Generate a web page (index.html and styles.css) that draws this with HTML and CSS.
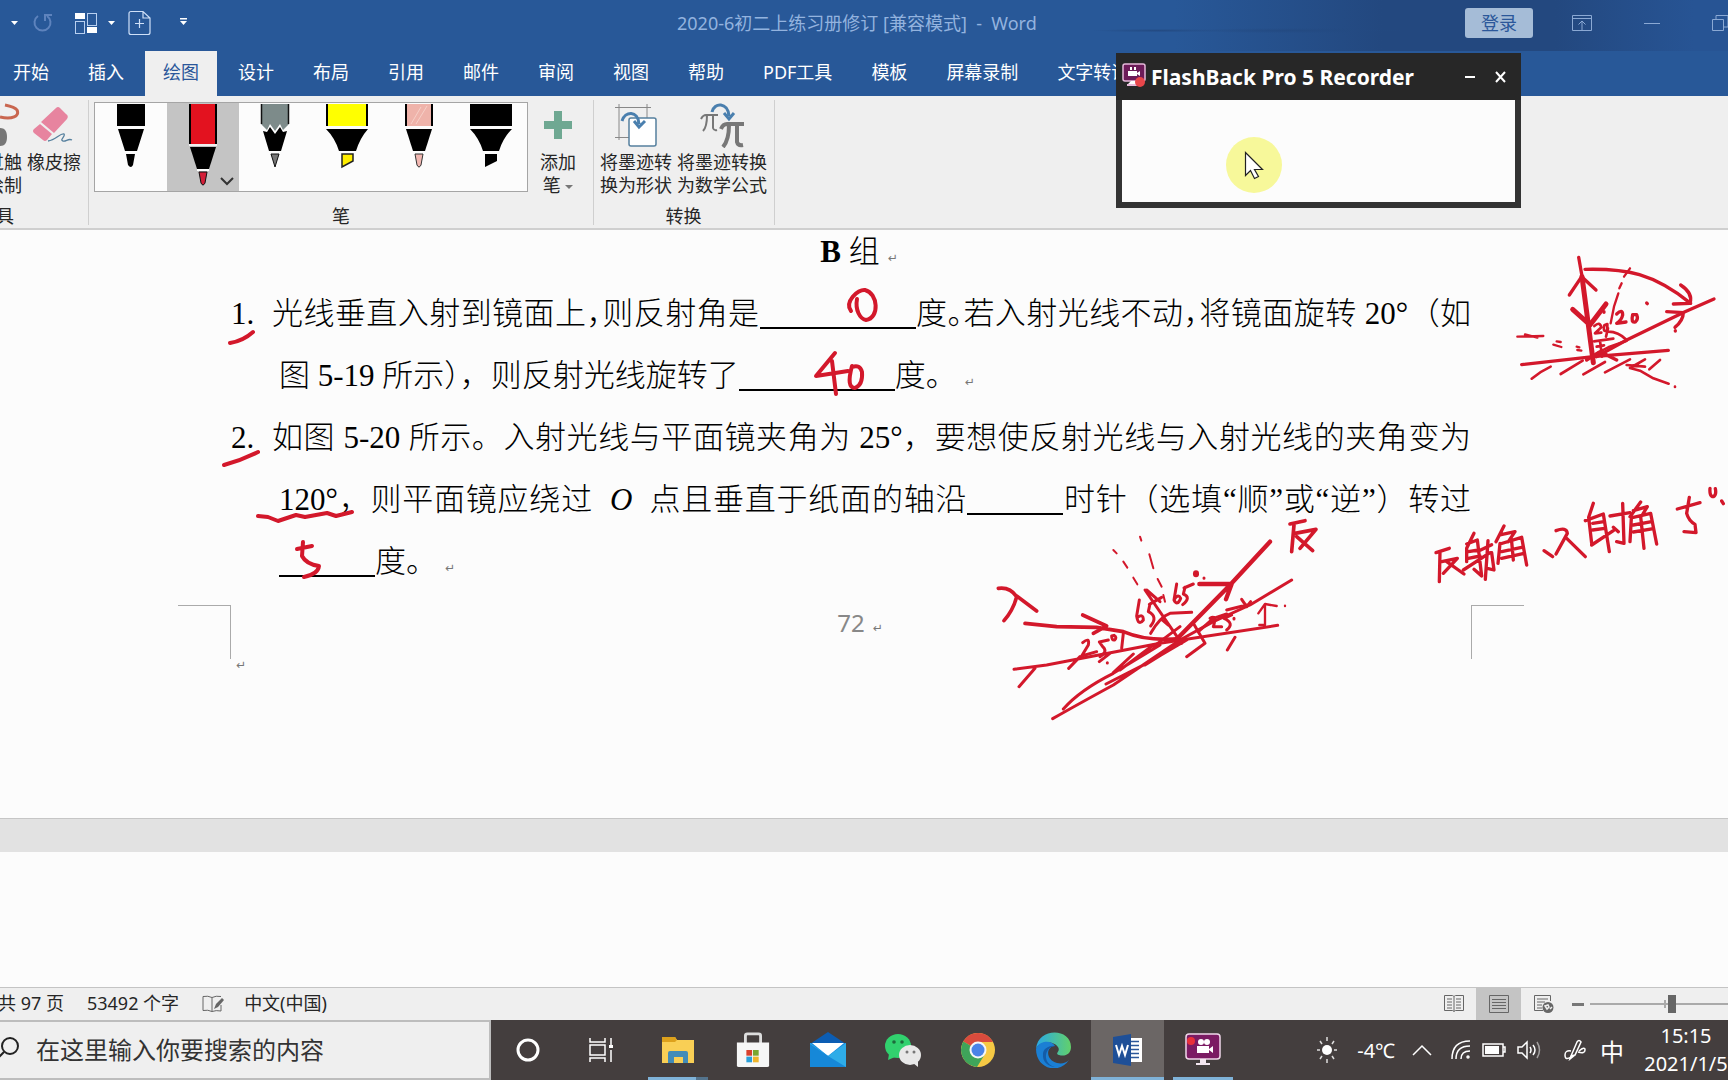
FILE: index.html
```html
<!DOCTYPE html>
<html lang="zh-CN">
<head>
<meta charset="utf-8">
<title>2020-6初二上练习册修订 [兼容模式] - Word</title>
<link rel="stylesheet" href="styles.css">
</head>
<body>
<div class="app">
  <header class="titlebar">
    <div class="quick">
      <svg width="200" height="48" viewBox="0 0 200 48" aria-hidden="true">
        <path d="M11 22h7l-3.500 4z" fill="#fff"/>
        <path d="M38 17a8 8 0 1 0 9 0M45 22v-6h7" fill="none" stroke="#5e83bd" stroke-width="2"/>
        <g fill="none" stroke="#b9d0f0"><rect x="75.500" y="22.500" width="9" height="12"/><rect x="87.500" y="14.500" width="9" height="12"/></g>
        <path d="M75 14h10v6H75zM87 28h10v6H87z" fill="#fff"/>
        <path d="M108 22h7l-3.500 4z" fill="#fff"/>
        <path d="M143 12.500h-12q-2 0-2 2v19q0 2 2 2h17q2 0 2-2V19zM143 12.500V19h7M135 24.500h9M139.500 20v9" fill="none" stroke="#cfe0f8" stroke-width="1.200"/>
        <path d="M180 19h7v1.500h-7zM180 22h7l-3.500 4z" fill="#fff"/>
      </svg>
    </div>
    <h1 class="doc-title">2020-6初二上练习册修订 [兼容模式]&nbsp; -&nbsp; Word</h1>
    <div class="window-tools">
      <button class="login">登录</button>
      <button class="win" aria-label="功能区显示选项"><svg width="20" height="16" viewBox="0 0 20 16"><path d="M.5.5h19v15H.5zM.5 3.500h19M10 15V6M6.500 9.500L10 6l3.500 3.500"/></svg></button>
      <button class="win" aria-label="最小化"><svg width="16" height="16" viewBox="0 0 16 16"><path d="M0 8.500h16"/></svg></button>
      <button class="win" aria-label="还原"><svg width="16" height="16" viewBox="0 0 16 16"><path d="M.5 4.500h11v11H.5zM4 4V.5h12V12h-4"/></svg></button>
    </div>
  </header>
  <nav class="tabs">
    <button>开始</button><button>插入</button><button class="active">绘图</button><button>设计</button><button>布局</button><button>引用</button><button>邮件</button><button>审阅</button><button>视图</button><button>帮助</button><button>PDF工具</button><button>模板</button><button>屏幕录制</button><button>文字转语音</button>
  </nav>
  <section class="ribbon">
    <div class="group tools">
      <div class="row">
        <button class="cmd cut"><svg width="22" height="46" viewBox="0 0 22 46"><path d="M0 15c12 3 20-1 17-7-2-3-7-4-12-5" fill="none" stroke="#c9664f" stroke-width="3"/><path d="M0 26c6 0 7 5 7 9s-1 9-7 9z" fill="#777"/></svg><span>过触<br>绘制</span></button>
        <button class="cmd"><svg width="44" height="46" viewBox="0 0 44 46"><path d="M24 6q2-2 4 0l6 6q3 2 1 5L22 31 9 20z" fill="#e7849f"/><path d="M8 22l12 10-5 6q-2 2-4 0L2 31q-2-2 0-4z" fill="#e7849f"/><path d="M16 39c8-1 12-8 16-7 2 2-5 6-1 7 3 1 5-3 9-1" fill="none" stroke="#56809e" stroke-width="1.300"/></svg><span>橡皮擦</span></button>
      </div>
      <span class="label">具</span>
    </div>
    <div class="group">
      <div class="row">
        <div class="gallery">
          <button class="pen" aria-label="黑色笔"><svg viewBox="0 0 72 87"><path d="M22 0h28v22H22zM23 25h26l-7 22H30zM31 50h9l-2 11q-2 4-5 0z"/></svg></button>
          <button class="pen selected" aria-label="红色笔"><svg viewBox="0 0 72 87"><path d="M22 0h28v40H22z"/><path d="M24 0h24v40H24z" fill="#e3121f"/><path d="M22 41h28" stroke="#fff" stroke-width="1.500"/><path d="M23 43h26l-7 22H30z"/><path d="M30 66h12" stroke="#fff" stroke-width="2"/><path d="M32 68h8l-2 11q-2 4-4 0z" fill="#d31f38" stroke="#111"/><path d="M54 74l6 6 6-6" fill="none" stroke="#333" stroke-width="2"/></svg></button>
          <button class="pen" aria-label="铅笔"><svg viewBox="0 0 72 87"><path d="M22 0h28v20l-6 6-3-6-5 7-5-7-3 6-6-6z" fill="#7d8b8a"/><path d="M22.500 0v20M49.500 0v20" stroke="#111" stroke-width="1.500"/><path d="M24 27l4 1 3-5 5 7 5-7 3 5 4-1-6 20H30z"/><path d="M32 50h8l-4 13z" fill="#777" stroke="#111"/></svg></button>
          <button class="pen" aria-label="黄色荧光笔"><svg viewBox="0 0 72 87"><path d="M15 0h42v22H15z"/><path d="M17 0h38v22H17z" fill="#ff0"/><path d="M15 25h42q-8 9-12 22H28Q24 34 15 25z"/><path d="M31 50h11v7l-11 6z" fill="#fe0" stroke="#222" stroke-width="1.500"/></svg></button>
          <button class="pen" aria-label="粉色铅笔"><svg viewBox="0 0 72 87"><path d="M22 0h28v22H22z"/><path d="M24 0h24v22H24z" fill="#efb3aa"/><path d="M28 20L38 3M33 20L44 2" stroke="#f7d0c8"/><path d="M23 25h26l-7 22H30z"/><path d="M32 50h8l-2 11q-2 4-4 0z" fill="#f2b8b2" stroke="#333"/></svg></button>
          <button class="pen" aria-label="黑色荧光笔"><svg viewBox="0 0 72 87"><path d="M15 0h42v22H15zM15 25h42q-9 9-13 22H28Q24 34 15 25zM30 50h12v7l-12 6z"/></svg></button>
        </div>
        <button class="cmd add"><svg width="30" height="46" viewBox="0 0 30 46"><path d="M11 9h8v10h10v8H19v10h-8V27H1v-8h10z" fill="#6fa892"/></svg><span>添加<br>笔 <i class="caret"></i></span></button>
      </div>
      <span class="label">笔</span>
    </div>
    <div class="group convert">
      <div class="row">
        <button class="cmd"><svg width="44" height="46" viewBox="0 0 44 46"><path d="M5 2v36M33 2v36M1 5.500h36M1 35.500h20" fill="none" stroke="#888"/><rect x="15" y="16" width="27" height="28" rx="2" fill="#fff" stroke="#56809e" stroke-width="1.500"/><path d="M8 19C11 9 24 8 25 22M20 19l5 6 6-6" fill="none" stroke="#4a7fae" stroke-width="3"/></svg><span>将墨迹转<br>换为形状</span></button>
        <button class="cmd"><svg width="44" height="46" viewBox="0 0 44 46"><g fill="none" stroke="#777"><path d="M1 17q2-4 5-4h12M7 13q0 12-4 16M13 13v13q1 3 4 2" stroke-width="2"/><path d="M21 27q2-5 6-5h17M29 23q0 15-6 22M37 23v17q1 4 6 3" stroke-width="4"/></g><path d="M12 10C14 0 28 0 29 14M24 11l5 6 5-6" fill="none" stroke="#4a7fae" stroke-width="3"/></svg><span>将墨迹转换<br>为数学公式</span></button>
      </div>
      <span class="label">转换</span>
    </div>
  </section>

  <main class="canvas">
    <article class="sheet">
      <h2 class="heading"><b>B</b> 组<i class="mark">↵</i></h2>
      <div class="question">
        <span class="num">1.</span>
        <p>
          <span class="line full">光线垂直入射到镜面上<span class="half">，</span>则反射角是<span class="blank wide"></span>度<span class="half">。</span>若入射光线不动<span class="half">，</span>将镜面旋转 20°（如</span>
          <span class="line hang">图 5-19 所示<span class="half">）</span>，则反射光线旋转了<span class="blank wide"></span>度。<i class="mark">↵</i></span>
        </p>
      </div>
      <div class="question">
        <span class="num">2.</span>
        <p>
          <span class="line full">如图 5-20 所示。入射光线与平面镜夹角为 25°，要想使反射光线与入射光线的夹角变为</span>
          <span class="line full hang">120°，则平面镜应绕过&nbsp; <em>O</em>&nbsp; 点且垂直于纸面的轴沿<span class="blank"></span>时针（选填“顺”或“逆”）转过</span>
          <span class="line hang"><span class="blank"></span>度。<i class="mark">↵</i></span>
        </p>
      </div>
      <footer class="folio"><span class="corner left"></span><span class="number">72<i class="mark">↵</i></span><span class="corner right"></span></footer>
      <i class="mark end">↵</i>
    </article>
    <svg class="ink" width="1728" height="590" viewBox="0 230 1728 590" aria-hidden="true">
      <g stroke-width="4">
        <path d="M851 311C844 302 858 289 865 290C878 293 880 318 866 320C860 319 855 310 857 299"/>
        <path d="M835 353L816 376L848 371M832 361L836 394M852 366Q846 388 855 388Q863 385 862 372Q860 364 852 367"/>
        <path d="M230 343Q243 341 253 332M224 465Q242 460 258 452M258 516L268 517L278 521L296 515L305 517L327 513L336 516L352 512"/>
        <path d="M303 542L302 556Q306 564 319 566Q318 574 304 577M297 549L312 546"/>
      </g>
      <g transform="translate(1400 240) scale(.33333)" stroke-width="10">
        <path d="M536 52L548 120M508 165L545 110L588 150M555 88C680 85 760 100 872 190M842 135Q880 160 870 190L820 192"/>
        <path d="M546 110L580 368M518 208L570 255L618 192" stroke-width="15"/>
        <path d="M690 85L672 110M665 130L658 145M655 160L642 200L632 250" stroke-width="7"/>
        <path d="M590 350L680 300L855 215L942 177M800 215L850 218Q850 240 825 262"/>
        <path d="M650 222Q668 205 668 225Q665 240 650 250L678 246M698 224Q692 250 706 246Q716 238 710 224ZM740 189l2 2M826 272v1M612 215v2"/>
        <path d="M583 258Q600 243 604 262L585 280L604 278M613 256Q608 280 622 270L622 252ZM624 265L618 290M582 304L640 296M600 302L606 350M590 320L612 316M625 275Q655 275 680 300M590 340L625 322L680 302" stroke-width="8"/>
        <path d="M352 290L430 288M375 283L412 293M470 304l12 2M460 314l24 7M530 320l8 2M532 330l12 2" stroke-width="7"/>
        <path d="M365 374L580 350L805 331M560 360L600 335L650 360" />
        <path d="M452 380Q420 395 395 416M548 362L482 402M615 366L550 403M690 358L615 397M735 358L690 384L720 392L760 415L806 431M680 375L735 380M780 360L748 388M825 440v1" stroke-width="8"/>
        <path d="M108 938L148 925M120 935L118 1025M125 965L172 955L130 1000M140 965L192 1002"/>
        <path d="M222 880L200 925L200 965M200 912L232 900L245 1008L222 988M205 935L236 930M205 955L240 948M190 990L270 938M242 930L275 914M264 902L256 1018M275 938L282 990L262 985"/>
        <path d="M312 858L288 905M300 885L345 875L325 905M300 910L294 970M300 912L365 892L380 975M305 935L365 922M305 955L372 940M335 905L340 960"/>
        <path d="M432 932L458 950M468 872Q500 860 502 880L468 942M500 895L556 950"/>
        <path d="M580 790L566 832L575 910M556 842L610 822L628 935M578 850L612 845M578 870L614 865M575 915L640 872M630 828L690 818M668 790L672 910L650 905M640 862L655 875"/>
        <path d="M722 786L690 830M700 812L742 800L725 828M694 835L690 905M700 832L752 820L770 912M700 855L755 845M700 876L760 866M722 830L732 925"/>
        <path d="M868 772L860 820Q866 842 885 853L888 878L852 875M832 807L900 788M930 745Q928 770 940 770Q950 765 946 746M965 783l5 8"/>
      </g>
      <g transform="translate(980 510) scale(.33333)" stroke-width="9">
        <path d="M55 235Q90 230 110 260Q100 300 72 332M110 258L170 303" stroke-width="11"/>
        <path d="M135 340L230 350L350 352L430 365Q500 395 600 386M308 315L380 348L340 370" stroke-width="11"/>
        <path d="M102 478L200 465L540 400L893 346M165 475L117 530M300 440L266 475M390 430L358 455M382 458v1M640 340L675 400L620 440M765 382L742 420"/>
        <path d="M308 398Q330 380 325 405L305 438L350 425M385 390L358 396L368 410Q385 425 360 440M395 378Q395 392 404 390Q412 382 402 376ZM430 370L425 415"/>
        <path d="M218 626Q290 585 400 525L600 390L700 335L810 285L935 210M250 597Q300 540 400 490L540 405M378 522L500 460L620 390M400 488L460 432M420 480L520 405M495 465L600 400M520 410L600 350"/>
        <path d="M590 388L750 225L870 95M658 222L755 222L738 268" stroke-width="13"/>
        <path d="M930 42L975 32M942 45L935 125M945 70L1008 58L960 115M950 80L998 122" stroke-width="11"/>
        <path d="M400 120l10 10M430 155l12 18M460 203l12 20M480 80l4 12M508 133L520 175M533 207L545 230M550 255l5 20" stroke-width="6"/>
        <path d="M495 240L605 400M478 270L470 318Q475 350 490 330Q490 310 473 322M510 282L505 305Q535 320 512 348M508 283L545 262M500 240L540 275"/>
        <path d="M590 222L582 270Q592 290 602 265Q595 250 583 268M615 232L610 252Q635 262 608 284M612 234L640 222"/>
        <path d="M648 190v3" stroke-width="18"/>
        <path d="M672 204v1M512 370Q540 320 570 310L635 307M545 328L565 345"/>
        <path d="M690 325Q712 312 700 350L725 350M755 315L732 325Q765 340 740 360M740 300L800 285M785 268L800 290L812 275M655 365L700 325L740 312M762 325v2"/>
        <path d="M835 310L855 282L890 288M855 283L855 345L838 345M915 287v1" stroke-width="7"/>
      </g>
    </svg>
  </main>
  <div class="next-sheet"></div>

  <footer class="status">
    <span class="pages">共 97 页</span><span>53492 个字</span>
    <svg width="22" height="18" viewBox="0 0 22 18" aria-hidden="true"><path d="M1 1.500q5-1 9 1v14q-4-2-9-1zM10 2.500q4-2 9-1M19 10v6q-5-1-9 .5" fill="none" stroke="#666"/><path d="M12 14l2-5 6-6 2 2-6 7z" fill="#666"/></svg>
    <span>中文(中国)</span>
    <div class="views">
      <button aria-label="阅读视图"><svg width="20" height="18" viewBox="0 0 20 18"><path d="M.5.500h8l1.500 1 1.500-1h8v15h-8l-1.500 1-1.500-1h-8zM10 2v14M3 4h5M3 7h5M3 10h5M3 13h5M12 4h5M12 7h5M12 10h5M12 13h5"/></svg></button>
      <button class="on" aria-label="页面视图"><svg width="20" height="18" viewBox="0 0 20 18"><path d="M.5.500h19v17H.5zM3 4.500h14M3 7.500h14M3 10.500h14M3 13.500h14"/></svg></button>
      <button aria-label="Web 版式视图"><svg width="20" height="18" viewBox="0 0 20 18"><path d="M9 15.500H.5V.500h16V6M3 4h11M3 7h8M3 10h5M3 13h5"/><circle cx="14" cy="12.500" r="5.500" fill="#666" stroke="none"/><path d="M11 11l3-1 1 2-2 2zM16 14l2-2" stroke="#efefef" stroke-width="1.500"/></svg></button>
    </div>
    <button class="minus" aria-label="缩小"></button>
    <div class="zoom"><input type="range" min="0" max="100" value="60" aria-label="缩放"></div>
  </footer>

  <div class="taskbar">
    <label class="search"><svg width="20" height="30" viewBox="0 0 20 30"><circle cx="10" cy="11" r="8"/><path d="M4 17l-6 6"/></svg><input type="text" placeholder="在这里输入你要搜索的内容" aria-label="搜索"></label>
    <div class="apps">
      <button aria-label="Cortana"><svg viewBox="0 0 36 36"><circle cx="18" cy="18" r="10" fill="none" stroke="#fff" stroke-width="3"/></svg></button>
      <button aria-label="任务视图"><svg viewBox="0 0 36 36"><path d="M5 6v4h15V6M5 30v-4h15v4M5 13h15v10H5zM26 6v7M26 18v12" fill="none" stroke="#fff" stroke-width="1.500"/><path d="M24 13h4v3h-4z" fill="#fff"/></svg></button>
      <button class="run many" aria-label="文件资源管理器"><svg viewBox="0 0 36 36"><path d="M2 5h13l2 3h17v23H2z" fill="#f9cf55"/><path d="M2 5h13l2 3-2 2H2z" fill="#dda11c"/><path d="M8 31V21q0-2 2-2h16q2 0 2 2v10h-5v-6H14v6z" fill="#428cb8"/></svg></button>
      <button aria-label="Microsoft Store"><svg viewBox="0 0 36 38"><path d="M10 12V4q0-2 2-2h12q2 0 2 2v8" fill="none" stroke="#ddd" stroke-width="3"/><path d="M1 11h34v24q0 2-2 2H3q-2 0-2-2z" fill="#f6f6f6"/><path d="M11 19h6v6h-6z" fill="#d8402d"/><path d="M18 19h6v6h-6z" fill="#7aa630"/><path d="M11 26h6v6h-6z" fill="#2b9fd8"/><path d="M18 26h6v6h-6z" fill="#efb52b"/></svg></button>
      <button aria-label="邮件"><svg viewBox="0 0 36 36"><path d="M0 12L18 0l18 12z" fill="#0c5db3"/><path d="M0 11h36v24H0z" fill="#1487df"/><path d="M2 11h32L18 24z" fill="#fff"/><path d="M0 11l18 13L36 11v24H0z" fill="#2eace8"/><path d="M18 24l18 11H0V12z" fill="#1688d8"/></svg></button>
      <button aria-label="微信"><svg viewBox="0 0 36 36"><ellipse cx="13" cy="14" rx="13" ry="12" fill="#31d16e"/><path d="M4 22l-1 6 7-3z" fill="#31d16e"/><g fill="#1d6b3c"><circle cx="9" cy="10" r="1.800"/><circle cx="17" cy="10" r="1.800"/></g><ellipse cx="25" cy="23" rx="11" ry="10" fill="#e8e8e8"/><path d="M28 31l5 4v-6z" fill="#e8e8e8"/><circle cx="22" cy="20" r="1.500" fill="#777"/><circle cx="29" cy="20" r="1.500" fill="#777"/></svg></button>
      <button aria-label="Chrome"><svg viewBox="0 0 36 36"><circle cx="18" cy="18" r="17" fill="#f6c944"/><path d="M18 18L3.300 9.500A17 17 0 0 1 33 10H18z" fill="#d94b3d"/><path d="M3.300 9.500A17 17 0 0 0 17 35l8-13-7-4z" fill="#3fa45a"/><circle cx="18" cy="18" r="8.500" fill="#f6f6f6"/><circle cx="18" cy="18" r="6.500" fill="#4a83e8"/></svg></button>
      <button aria-label="Edge"><svg viewBox="0 0 36 36"><defs><linearGradient id="eg"><stop offset="0" stop-color="#29a9e6"/><stop offset="1" stop-color="#62d06b"/></linearGradient></defs><path d="M1 17C3-5 36-4 36 15c0 7-6 10-12 8-5-2 2-3-1-8C18 8 4 9 1 17z" fill="url(#eg)"/><path d="M1 17C4 8 17 8 20 14c-9 0-10 14 2 17 5 1 9 0 12-3C24 43 1 37 1 17z" fill="#1b7fd4"/><path d="M20 14c-11 1-13 18 0 21-6 0-13-5-12-13 0-5 6-9 12-8z" fill="#145ca8"/></svg></button>
      <button class="run current" aria-label="Word"><svg viewBox="0 0 36 36"><path d="M17 6h15v24H17z" fill="#fff"/><path d="M20 9.500h9M20 13.500h9M20 17.500h9M20 21.500h9M20 25.500h9" stroke="#2b579a" stroke-width="1.500"/><path d="M3 5l18-3v32L3 31z" fill="#1e4f97"/><path d="M6 13l3 10 3-9 3 9 3-10" fill="none" stroke="#fff" stroke-width="2"/></svg></button>
      <button class="run" aria-label="FlashBack"><svg viewBox="0 0 36 36"><rect x="1" y="2" width="34" height="25" rx="3" fill="#7b1b63" stroke="#f0d8ea" stroke-width="1.500"/><path d="M15 27h6v4h4v2H11v-2h4z" fill="#f3e6ef"/><circle cx="16" cy="10" r="3" fill="#fff"/><circle cx="22" cy="10" r="3" fill="#fff"/><path d="M12 14h12v7H12zM24 17l4-3v7l-4-3z" fill="#fff"/><circle cx="6" cy="9" r="4" fill="#e8303a"/></svg></button>
    </div>
    <div class="tray">
      <svg width="20" height="28" viewBox="0 0 20 28"><circle cx="10" cy="14" r="5" fill="#fff"/><path d="M10 1v4M10 23v4M0 14h3M17 14h3M3 5l2 3M17 5l-2 3M3 23l2-3M17 23l-2-3" stroke="#ddd" stroke-width="1.500"/></svg>
      <span>-4℃</span>
      <svg class="line-icon up" width="20" height="12" viewBox="0 0 20 12"><path d="M1 11l9-9 9 9"/></svg>
      <svg class="line-icon wifi" width="20" height="20" viewBox="0 0 20 20"><path d="M1 19Q1 1 19 1M5 19Q5 6 19 6M10 19Q10 11 19 11"/><circle cx="17" cy="17" r="1"/></svg>
      <svg class="line-icon" width="24" height="14" viewBox="0 0 24 14"><path d="M1 1h20v12H1zM21 4h2v5h-2"/><path d="M3 3h14v8H3z" fill="#fff" stroke="none"/></svg>
      <svg class="line-icon" width="24" height="20" viewBox="0 0 24 20"><path d="M1 7h4l5-5v16l-5-5H1zM13 7q2 3 0 6M16 5q4 5 0 10"/><path d="M20 2q5 8 0 16" opacity=".5"/></svg>
      <svg class="line-icon link" width="22" height="22" viewBox="0 0 22 22"><path d="M7 17L13 3q2-3 4 0L11 16zM7 17l-1 3 5-4M7 12q-6-1-6 4 0 6 6 2M15 12q6-5 6-1 0 4-7 2"/></svg>
      <span class="ime">中</span>
      <time>15:15<br>2021/1/5</time>
    </div>
  </div>

  <aside class="recorder">
    <header>
      <svg width="24" height="28" viewBox="0 0 24 28" aria-hidden="true"><rect x="1" y="1" width="22" height="17" rx="2" fill="#6d1b59" stroke="#e6b9da" stroke-width="1.500"/><path d="M6 8h9v5H6zM15 10l3-2v5l-3-2zM8 4h2v3H8zM12 4h2v3h-2zM9 18h5v3H6z" fill="#fff"/><path d="M5 21h10v2H5z" fill="#e6b9da"/><circle cx="18" cy="19" r="5" fill="#e8464a"/></svg>
      <strong>FlashBack Pro 5 Recorder</strong>
      <button aria-label="最小化"><svg width="12" height="12" viewBox="0 0 12 12"><path d="M1 6h10"/></svg></button>
      <button aria-label="关闭"><svg width="12" height="12" viewBox="0 0 12 12"><path d="M1 1l9 10M10 1L1 11"/></svg></button>
    </header>
    <div class="preview">
      <svg class="pointer" width="56" height="56" viewBox="0 0 56 56" aria-hidden="true"><circle cx="28" cy="28" r="28" fill="#f7f89a"/><path d="M19.500 15.500v23l5-5 4 8 4-2-4-7h8z" fill="#fff" stroke="#222" stroke-width="1.200"/></svg>
    </div>
  </aside>
</div>
</body>
</html>
```

FILE: styles.css
```css
* { box-sizing: border-box; }
body { margin: 0; background: #fcfcfc; color: #262626; font-family: "Noto Sans", "Noto Sans CJK SC", sans-serif; }
button { border: 0; margin: 0; padding: 0; background: none; color: inherit; font: inherit; }
svg { display: block; flex: none; }
i { font-style: normal; }

.app { position: relative; display: flex; flex-direction: column; min-height: 100vh; overflow: hidden; }

.titlebar { display: flex; align-items: center; height: 51px; padding-bottom: 5px; color: #93b3df;
  background: radial-gradient(ellipse at 67% 60%, #234a82 0, transparent 4%), radial-gradient(ellipse at 75% 60%, #234a82 0, transparent 6%), linear-gradient(90deg, #285898 68%, #23487f 80%, #23487f 90%, #275494 98%); }
.quick { width: 677px; }
.doc-title { margin: 0; font-size: 18px; line-height: 24px; font-weight: 400; white-space: pre; }
.window-tools { display: flex; align-items: center; margin-left: auto; }
.login { width: 68px; height: 30px; margin-right: 39px; border-radius: 3px; background: #a5bcd7; color: #2b579a; font-size: 18px; line-height: 28px; }
.win { margin-right: 52px; }
.win:last-child { margin-right: 0; }
.win svg { fill: none; stroke: #8ba9d4; }

.tabs { display: flex; gap: 3px; height: 45px; background: #285898; color: #fff; white-space: nowrap; }
.tabs button { flex: none; padding: 0 18px 3px; font-size: 18px; line-height: 42px; }
.tabs button:first-child { padding-left: 13px; }
.tabs .active { background: #efefef; color: #2b579a; }

.ribbon { display: flex; height: 134px; padding-top: 4px; background: #efefef; border-bottom: 2px solid #cfcfcf; }
.group { display: flex; flex-direction: column; justify-content: space-between; height: 125px; border-right: 1px solid #cfcfcf; padding: 2px 5px 0; font-size: 18px; line-height: 24px; }
.row { display: flex; gap: 5px; }
.label { align-self: center; line-height: 18px; }
.tools { width: 89px; padding-left: 0; padding-right: 7px; }
.tools .label { align-self: flex-start; margin-left: -4px; }
.convert { padding-right: 7px; padding-left: 6px; }
.cmd { display: flex; flex-direction: column; align-items: center; align-self: flex-start; flex: none; gap: 3px; line-height: 23px; white-space: nowrap; }
.cmd.cut { width: 22px; align-items: flex-end; }
.cmd.add { width: 50px; }
.caret { display: inline-block; vertical-align: middle; border: 4px solid transparent; border-top-color: #777; border-bottom: 0; }
.gallery { display: flex; height: 90px; border: 1px solid #a5a5a5; background: #fcfcfc; }
.add { margin-right: 5px; }
.pen { width: 72px; }
.pen svg { width: 72px; height: 87px; }
.pen.selected { background: #c4c4c4; }

.canvas { position: relative; flex: 1; overflow: hidden; color: #000; }
.sheet { width: 1471px; padding-left: 231px; font-family: "Liberation Serif", "Noto Sans CJK SC", serif; font-size: 31px; line-height: 62px; font-weight: 300; }
.heading { margin: -9px 0 0; padding-left: 16px; font-size: 31px; font-weight: 300; text-align: center; }
.heading b { font-weight: 700; }
.question { display: flex; }
.question p { flex: 1; margin: 0; }
.num { width: 41px; }
.line { display: block; height: 62px; white-space: nowrap; }
.full { text-align: justify; text-align-last: justify; white-space: normal; }
.hang { padding-left: 7px; }
.half { font-feature-settings: "halt"; }
.blank { display: inline-block; width: 96px; height: 2px; background: #000; vertical-align: -5px; }
.blank.wide { width: 156px; }
.mark { margin-left: 8px; color: #777; font: 400 12px/12px "DejaVu Sans", sans-serif; }
.folio { display: flex; justify-content: space-between; margin: 12px -53px 0; color: #888; font-family: "Noto Sans", sans-serif; font-size: 24px; line-height: 36px; font-weight: 400; }
.number { padding-left: 18px; }
.corner { width: 53px; height: 54px; border-top: 1px solid #aaa; }
.corner.left { border-right: 1px solid #aaa; }
.corner.right { border-left: 1px solid #aaa; }
.mark.end { display: block; margin-left: 5px; }
.ink { position: absolute; left: 0; top: 0; fill: none; stroke: #d3182b; stroke-linecap: round; stroke-linejoin: round; }
.next-sheet { height: 168px; border-top: 33px solid #e2e2e2; background: #fcfcfc; outline: 1px solid #c6c6c6; }

.status { display: flex; align-items: center; height: 33px; background: #efefef; border-top: 1px solid #c4c4c4; font-size: 18px; line-height: 31px; white-space: nowrap; }
.status > span { margin-right: 23px; padding-bottom: 1px; }
.status .pages { margin-left: -2px; }
.status > svg { margin-right: 20px; }
.views { display: flex; align-self: stretch; margin-left: auto; }
.views button { display: flex; align-items: center; justify-content: center; width: 45px; }
.views svg { fill: none; stroke: #666; }
.views .on { background: #c4c4c4; }
.minus { width: 12px; height: 3px; margin: 0 6px; background: #777; }
.zoom { width: 138px; overflow: hidden; display: flex; }
.zoom input { flex: none; width: 138px; height: 18px; margin: 0; appearance: none; background: linear-gradient(#aaa, #aaa) 0 50% / 100% 2px no-repeat, linear-gradient(#aaa, #aaa) 74px 50% / 2px 8px no-repeat; }
.zoom input::-webkit-slider-thumb { appearance: none; width: 8px; height: 18px; background: #666; }

.taskbar { display: flex; height: 60px; background: #443e3e; color: #fff; }
.search { display: flex; align-items: center; width: 491px; background: #efefef; border: 2px solid #bdbdbd; border-left: 0; }
.search svg { fill: none; stroke: #222; stroke-width: 2; }
.search input { flex: 1; min-width: 0; margin-left: 16px; padding: 0; border: 0; background: none; font: 24px/32px "Noto Sans", "Noto Sans CJK SC", sans-serif; }
.search input::placeholder { color: #333; opacity: 1; }
.apps { display: flex; gap: 2px; }
.apps button { display: flex; align-items: center; justify-content: center; width: 73px; }
.apps svg { width: 36px; height: 36px; }
.apps .run { background: linear-gradient(#7fb2d8, #7fb2d8) 50% 100% / 60px 3px no-repeat; }
.apps .many { background: linear-gradient(90deg, #7fb2d8 80%, #54738c 80%) 50% 100% / 60px 3px no-repeat; }
.apps .current { background: linear-gradient(#7fb2d8, #7fb2d8) 50% 100% / 100% 3px no-repeat #6b6665; }
.tray { display: flex; align-items: center; gap: 20px; margin-left: auto; font-size: 20px; white-space: nowrap; }
.line-icon { fill: none; stroke: #fff; stroke-width: 1.500; }
.tray .up { margin-left: -3px; }
.tray svg + .line-icon { margin-left: -9px; }
.tray svg.wifi { margin-left: -1px; }
.tray svg.link { margin-left: 3px; }
.ime { margin-left: -6px; font-size: 24px; }
.tray time { width: 84px; line-height: 28px; text-align: center; }

.recorder { position: absolute; left: 1116px; top: 53px; width: 405px; height: 155px; padding: 0 6px 6px; display: flex; flex-direction: column; background: #333; color: #fff; }
.recorder header { display: flex; align-items: center; gap: 5px; height: 47px; margin: 0 -6px; padding: 0 14px 0 6px; background: #272727; }
.recorder strong { flex: 1; font: 700 21px/28px "Noto Sans", sans-serif; white-space: nowrap; }
.recorder button + button { margin-left: 14px; }
.recorder button svg { fill: none; stroke: #fff; stroke-width: 2; }
.preview { flex: 1; background: #fcfcfc; }
.pointer { margin: 37px 0 0 104px; }
```
